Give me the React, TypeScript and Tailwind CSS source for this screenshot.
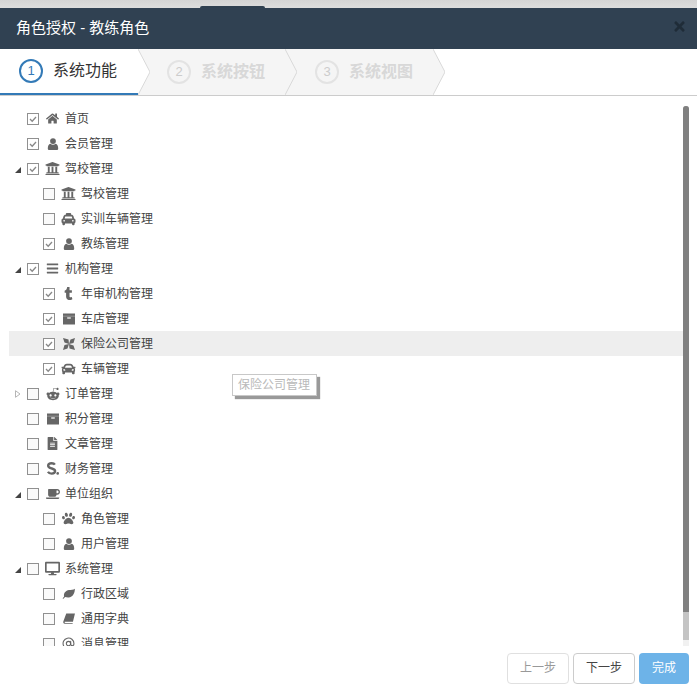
import { FaHome, FaUniversity, FaTaxi, FaBars, FaTumblr, FaCar, FaRedditAlien, FaFileAlt, FaCoffee, FaPaw, FaDesktop, FaTimes } from 'react-icons/fa';
import { AtSign } from 'lucide-react';
import type { ComponentType } from 'react';

type IconProps = { className?: string };

function UserIcon({ className }: IconProps) {
  return (
    <svg viewBox="0 0 12 12" fill="currentColor" className={className}>
      <circle cx="6" cy="3.1" r="2.9" />
      <path d="M.8 10.4C.8 8 1.7 6 3.4 5.8 4.1 6.4 5 6.8 6 6.8s1.9-.4 2.6-1c1.700.2 2.600 2.200 2.600 4.600 0 1-.7 1.600-1.600 1.600H2.400C1.500 12 .8 11.400.8 10.400z" />
    </svg>
  );
}

function ArchiveIcon({ className }: IconProps) {
  return (
    <svg viewBox="0 0 12 12" className={className}>
      <rect x="0" y="0.5" width="12" height="11" fill="currentColor" />
      <rect x="0" y="2.800" width="12" height="0.6" fill="#ffffff" opacity="0.5" />
      <rect x="4.200" y="4.400" width="3.600" height="1.200" fill="#ffffff" />
    </svg>
  );
}

function PinwheelIcon({ className }: IconProps) {
  return (
    <svg viewBox="0 0 12 12" fill="currentColor" className={className}>
      <path d="M0 0L5.500 1.500 6 6 1.500 4.500zM12 0L10.500 5 6 6 7.500 1.500zM12 12L6.500 10.500 6 6 10.500 7.500zM0 12L1.500 7 6 6 4.500 10.500z" />
    </svg>
  );
}

function ScribdIcon({ className }: IconProps) {
  return (
    <svg viewBox="0 0 12 12" className={className} fill="none">
      <path d="M8.200 2.400C7.600 1.500 6.500 1.200 5.300 1.200 3.500 1.200 2 2 2 3.500 2 5.200 3.800 5.600 5.300 6 6.800 6.400 8.400 6.800 8.400 8.400 8.400 10 6.800 10.700 5.200 10.700 3.600 10.700 2.400 10.100 1.800 9" stroke="currentColor" strokeWidth="2.200" />
      <circle cx="10.800" cy="10.500" r="1.200" fill="currentColor" />
    </svg>
  );
}

function LeafIcon({ className }: IconProps) {
  return (
    <svg viewBox="0 0 14 12" fill="currentColor" className={className}>
      <path d="M.5 11.500C1 11 1.700 9.900 2.200 9.300 1.300 5.800 4 2.800 7.500 2.300 9.800 2 12.300 2 14 .8 13.800 5.500 12 10 7 10.300 5.500 10.400 4.200 10 3.300 9.700L1.500 11.800z" />
    </svg>
  );
}

function BookIcon({ className }: IconProps) {
  return (
    <svg viewBox="0 0 13 12" fill="currentColor" className={className}>
      <path d="M3.500 .5H13L10.800 9.500H1.800C1.500 10 1.800 10.800 2.500 10.800H10.500V11.800H1.800C.5 11.800 0 10.500 .3 9.300z" />
    </svg>
  );
}

type TreeNode = {
  label: string;
  icon: ComponentType<IconProps>;
  size: string;
  checked?: boolean;
  level?: number;
  arrow?: 'open' | 'closed';
  hover?: boolean;
};

const nodes: TreeNode[] = [
  { label: '首页', icon: FaHome, size: 'h-[13px] w-[13px]', checked: true },
  { label: '会员管理', icon: UserIcon, size: 'h-[12px] w-[12px]', checked: true },
  { label: '驾校管理', icon: FaUniversity, size: 'h-[15px] w-[15px]', checked: true, arrow: 'open' },
  { label: '驾校管理', icon: FaUniversity, size: 'h-[15px] w-[15px]', level: 1 },
  { label: '实训车辆管理', icon: FaTaxi, size: 'h-[14px] w-[15px]', level: 1 },
  { label: '教练管理', icon: UserIcon, size: 'h-[12px] w-[12px]', checked: true, level: 1 },
  { label: '机构管理', icon: FaBars, size: 'h-[13px] w-[13px]', checked: true, arrow: 'open' },
  { label: '年审机构管理', icon: FaTumblr, size: 'h-[13px] w-[13px]', checked: true, level: 1 },
  { label: '车店管理', icon: ArchiveIcon, size: 'h-[12px] w-[12px]', checked: true, level: 1 },
  { label: '保险公司管理', icon: PinwheelIcon, size: 'h-[12px] w-[12px]', checked: true, level: 1, hover: true },
  { label: '车辆管理', icon: FaCar, size: 'h-[14px] w-[15px]', checked: true, level: 1 },
  { label: '订单管理', icon: FaRedditAlien, size: 'h-[14px] w-[14px]', arrow: 'closed' },
  { label: '积分管理', icon: ArchiveIcon, size: 'h-[12px] w-[12px]' },
  { label: '文章管理', icon: FaFileAlt, size: 'h-[13px] w-[13px]' },
  { label: '财务管理', icon: ScribdIcon, size: 'h-[13px] w-[13px]' },
  { label: '单位组织', icon: FaCoffee, size: 'h-[14px] w-[14px]', arrow: 'open' },
  { label: '角色管理', icon: FaPaw, size: 'h-[13px] w-[13px]', level: 1 },
  { label: '用户管理', icon: UserIcon, size: 'h-[12px] w-[12px]', level: 1 },
  { label: '系统管理', icon: FaDesktop, size: 'h-[15px] w-[15px]', arrow: 'open' },
  { label: '行政区域', icon: LeafIcon, size: 'h-[11px] w-[13px]', level: 1 },
  { label: '通用字典', icon: BookIcon, size: 'h-[11px] w-[12px]', level: 1 },
  { label: '消息管理', icon: AtSign, size: 'h-[13px] w-[13px]', level: 1 },
];

const steps = [
  { n: 1, label: '系统功能', active: true, box: 'w-[138px] pl-[19px]', fill: '#ffffff' },
  { n: 2, label: '系统按钮', box: 'w-[147px] pl-[29px]', fill: '#f5f5f5' },
  { n: 3, label: '系统视图', box: 'w-[148px] pl-[30px]', fill: '#f5f5f5' },
];

function TreeRow({ node }: { node: TreeNode }) {
  const Icon = node.icon;
  return (
    <div className={`flex h-[25px] items-center ${node.hover ? 'bg-[#eeeeee]' : ''} ${node.level ? 'pl-[34px]' : 'pl-[18px]'}`}>
      <span className={`relative flex h-3 w-3 shrink-0 items-center justify-center border border-[#909090] ${node.checked ? 'bg-white' : 'bg-[#fafafa]'}`}>
        {node.checked && (
          <svg viewBox="0 0 10 10" className="h-[10px] w-[10px]" fill="none">
            <path d="M2 5l2.200 2.200L8 3" stroke="#888888" strokeWidth="1.300" />
          </svg>
        )}
        {node.arrow === 'open' && (
          <svg viewBox="0 0 6 6" className="absolute left-[-13px] top-[3px] h-[6px] w-[6px]">
            <path d="M0 6L6 0V6z" fill="#444444" />
          </svg>
        )}
        {node.arrow === 'closed' && (
          <svg viewBox="0 0 6 8" className="absolute left-[-13px] top-[1px] h-2 w-[6px]" fill="#ffffff">
            <path d="M.5.7L5 4 .5 7.300z" stroke="#b5b5b5" />
          </svg>
        )}
      </span>
      <span className="ml-[7px] flex h-[15px] w-[13px] shrink-0 items-center justify-center overflow-visible">
        <Icon className={`${node.size} shrink-0 text-[#666666]`} />
      </span>
      <span className="ml-[6px] text-[12px] text-[#444444]">{node.label}</span>
    </div>
  );
}

export default function App() {
  return (
    <div className="relative flex h-[690px] w-[697px] flex-col overflow-hidden bg-white font-['Liberation_Sans','Noto_Sans_CJK_SC',sans-serif]">
      <div className="h-2 shrink-0 bg-gradient-to-b from-[#d4d4d4] to-[#dddddd] pt-[6px]">
        <div className="ml-[200px] h-[2px] w-[65px] rounded-t bg-[#2f4050]" />
      </div>
      <div className="flex h-[41px] shrink-0 items-center justify-between bg-[#304152] pl-4 pr-[11px]">
        <span className="text-[15px] text-white">角色授权 - 教练角色</span>
        <FaTimes className="-mt-1 h-[15px] w-[13px] text-[#1f2c38]" />
      </div>
      <div className="flex h-[47px] shrink-0 border-b border-[#cccccc]">
        {steps.map((s) => (
          <div
            key={s.n}
            className={`relative flex h-[46px] items-center ${s.box} ${s.active ? 'border-b-2 border-[#337ab7] bg-white' : 'bg-[#f5f5f5]'}`}
          >
            <span className={`flex h-6 w-6 items-center justify-center rounded-full border-2 text-[13px] ${s.active ? 'border-[#337ab7] text-[#337ab7]' : 'border-[#e3e3e3] text-[#cccccc]'}`}>
              {s.n}
            </span>
            <span className={`ml-[10px] text-[16px] ${s.active ? 'text-[#333333]' : 'font-bold text-[#d8d8d8]'}`}>{s.label}</span>
            <svg viewBox="0 0 12 46" className="absolute left-full top-0 z-10 h-[46px] w-3">
              <path d="M0 0L12 23 0 46z" fill={s.fill} />
              <path d="M0 0L12 23 0 46" fill="none" stroke="#d9d9d9" />
            </svg>
          </div>
        ))}
      </div>
      <div className="relative mt-[10px] h-[540px] shrink-0 overflow-hidden pl-[9px] pr-[14px]">
        {nodes.map((n, i) => (
          <TreeRow key={i} node={n} />
        ))}
        <div className="absolute right-2 top-0 h-full w-[6px] rounded-t bg-[#f1f1f1]">
          <div className="h-[534px] rounded-t bg-[#c4c4c4]">
            <div className="h-[506px] rounded-t bg-[#808080]" />
          </div>
        </div>
      </div>
      <div className="flex flex-1 items-center justify-end gap-1 pr-2">
        <button className="h-[31px] w-[62px] rounded border border-[#e0e0e0] text-[12px] text-[#999999]">上一步</button>
        <button className="h-[31px] w-[62px] rounded border border-[#cccccc] text-[12px] text-[#444444]">下一步</button>
        <button className="h-[31px] w-[50px] rounded bg-[#6db3e8] text-[12px] text-white">完成</button>
      </div>
      <div className="absolute left-[232px] top-[374px] w-[85px] border border-[#c8c8c8] bg-white py-[3px] pl-[5px] text-[12px] leading-[14px] text-[#b9b9b9] shadow-[3px_3px_1px_#999999]">
        保险公司管理
      </div>
    </div>
  );
}
